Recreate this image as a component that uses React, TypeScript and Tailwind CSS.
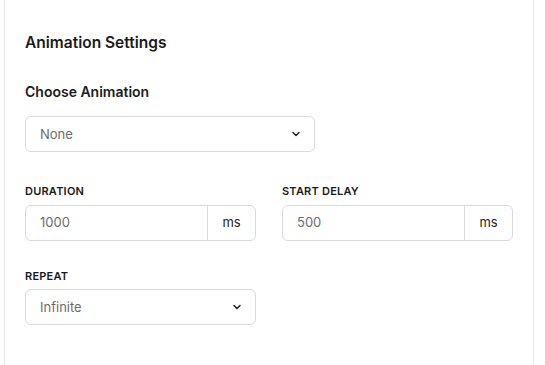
import { ChevronDown } from 'lucide-react';

const FONT = { fontFamily: 'Inter, "Noto Sans", sans-serif' };

function SelectBox({ value, className }: { value: string; className?: string }) {
  return (
    <div
      className={`flex h-9 items-center justify-between rounded-md border border-[#d9d9d9] bg-white pl-[14px] pr-3 ${className ?? ''}`}
    >
      <span className="text-[13px] text-[#6b6b6b]">{value}</span>
      <ChevronDown className="size-3 text-[#222]" strokeWidth={3} />
    </div>
  );
}

function UnitInput({ label, value }: { label: string; value: string }) {
  return (
    <div>
      <label className="block text-[11px] font-semibold tracking-[0.02em] text-[#1a1a1a]">
        {label}
      </label>
      <div className="mt-[5px] flex h-9 rounded-md border border-[#d9d9d9] bg-white">
        <div className="flex flex-1 items-center pl-[14px] text-[13px] text-[#6b6b6b]">{value}</div>
        <div className="flex w-12 items-center justify-center border-l border-[#d9d9d9] text-[13px] text-[#222]">
          ms
        </div>
      </div>
    </div>
  );
}

export default function App() {
  return (
    <div className="h-[365px] w-[545px] overflow-hidden bg-white" style={FONT}>
      <div className="-mt-2 ml-1 h-[380px] w-[530px] border border-[#ebebeb] bg-white px-5 pt-[38px]">
        <h2 className="text-[15.5px] font-semibold text-[#1a1a1a]">Animation Settings</h2>

        <h3 className="mt-[27px] text-[14px] font-semibold text-[#1a1a1a]">Choose Animation</h3>
        <SelectBox value="None" className="mt-[14px] w-[290px]" />

        <div className="mt-[31px] grid grid-cols-2 gap-x-[26px]">
          <UnitInput label="DURATION" value="1000" />
          <UnitInput label="START DELAY" value="500" />
        </div>

        <div className="mt-[27px] grid grid-cols-2 gap-x-[26px]">
          <div>
            <label className="block text-[11px] font-semibold tracking-[0.02em] text-[#1a1a1a]">
              REPEAT
            </label>
            <SelectBox value="Infinite" className="mt-[5px]" />
          </div>
        </div>
      </div>
    </div>
  );
}
